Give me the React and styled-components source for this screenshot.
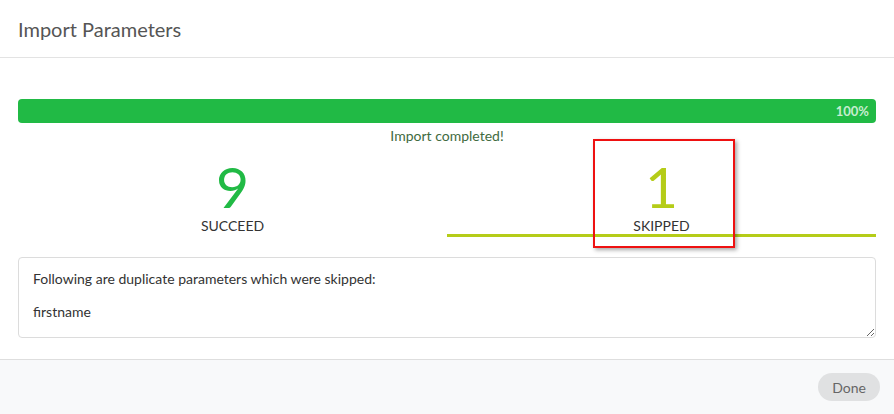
import React from 'react'
import styled, { createGlobalStyle } from 'styled-components'

const GlobalStyle = createGlobalStyle`
  html, body {
    margin: 0;
    padding: 0;
    background: #fff;
  }
  body {
    font-family: Lato, "Open Sans", sans-serif;
  }
`

const Modal = styled.div`
  position: relative;
  width: 894px;
  height: 414px;
  display: flex;
  flex-direction: column;
  background: #fff;
  overflow: hidden;
`

const Header = styled.div`
  height: 57px;
  padding: 0 18px;
  display: flex;
  align-items: center;
  border-bottom: 1px solid #e3e3e3;
  font-size: 20px;
  color: #555;
  box-sizing: content-box;
`

const Content = styled.div`
  flex: 1;
  padding: 41px 18px 21px;
`

const Progress = styled.div`
  height: 24px;
  border-radius: 4px;
  background: #e8e8e8;
  overflow: hidden;
`

const Bar = styled.div`
  height: 100%;
  background: #21ba45;
  display: flex;
  align-items: center;
  justify-content: flex-end;
  padding-right: 7px;
  box-sizing: border-box;
  font-size: 13px;
  font-weight: 700;
  color: rgba(255, 255, 255, 0.75);
`

const ProgressLabel = styled.div`
  margin-top: 4px;
  text-align: center;
  font-size: 14px;
  line-height: 17px;
  color: #3f6b3f;
`

const Stats = styled.div`
  display: grid;
  grid-template-columns: 1fr 1fr;
  margin-top: 1px;
`

const Stat = styled.div`
  display: flex;
  flex-direction: column;
  align-items: center;
  padding-top: 17px;
  height: 92px;
  box-sizing: border-box;
  border-bottom: 3px solid ${p => (p.active ? p.color : 'transparent')};
`

const Value = styled.div`
  font-size: 57px;
  line-height: 48px;
  color: ${p => p.color};
`

const Label = styled.div`
  margin-top: 8px;
  font-size: 14px;
  line-height: 16px;
  color: #333;
  text-transform: uppercase;
`

const Notes = styled.textarea`
  display: block;
  width: 100%;
  height: 81px;
  margin-top: 20px;
  padding: 13px 14px;
  box-sizing: border-box;
  border: 1px solid #dcdcdc;
  border-radius: 4px;
  font-family: Lato, "Open Sans", sans-serif;
  font-size: 14px;
  line-height: 16.5px;
  color: #333;
  outline: none;
  resize: vertical;
`

const Footer = styled.div`
  height: 55px;
  border-top: 1px solid #dedede;
  background: #f8f9fa;
  display: flex;
  align-items: center;
  justify-content: flex-end;
  padding: 0 14px;
  box-sizing: border-box;
`

const Button = styled.button`
  height: 28px;
  padding: 0 14px;
  border: none;
  border-radius: 14px;
  background: #e0e1e2;
  color: #666;
  font-family: Lato, "Open Sans", sans-serif;
  font-size: 14px;
  cursor: pointer;
`

const Highlight = styled.div`
  position: absolute;
  left: 593px;
  top: 139px;
  width: 142px;
  height: 109px;
  box-sizing: border-box;
  border: 2px solid #ee1111;
  box-shadow: 2px 2px 4px rgba(0, 0, 0, 0.35);
  pointer-events: none;
`

const stats = [
  { value: 9, label: 'Succeed', color: '#21ba45' },
  { value: 1, label: 'Skipped', color: '#b5cc18', active: true },
]

const App = () => {
  return (
    <Modal>
      <GlobalStyle />
      <Header>Import Parameters</Header>
      <Content>
        <Progress>
          <Bar style={{ width: '100%' }}>100%</Bar>
        </Progress>
        <ProgressLabel>Import completed!</ProgressLabel>
        <Stats>
          {stats.map(s => (
            <Stat key={s.label} active={s.active} color={s.color}>
              <Value color={s.color}>{s.value}</Value>
              <Label>{s.label}</Label>
            </Stat>
          ))}
        </Stats>
        <Notes
          readOnly
          value={'Following are duplicate parameters which were skipped:\n\nfirstname'}
        />
      </Content>
      <Footer>
        <Button>Done</Button>
      </Footer>
      <Highlight />
    </Modal>
  )
}

export default App
